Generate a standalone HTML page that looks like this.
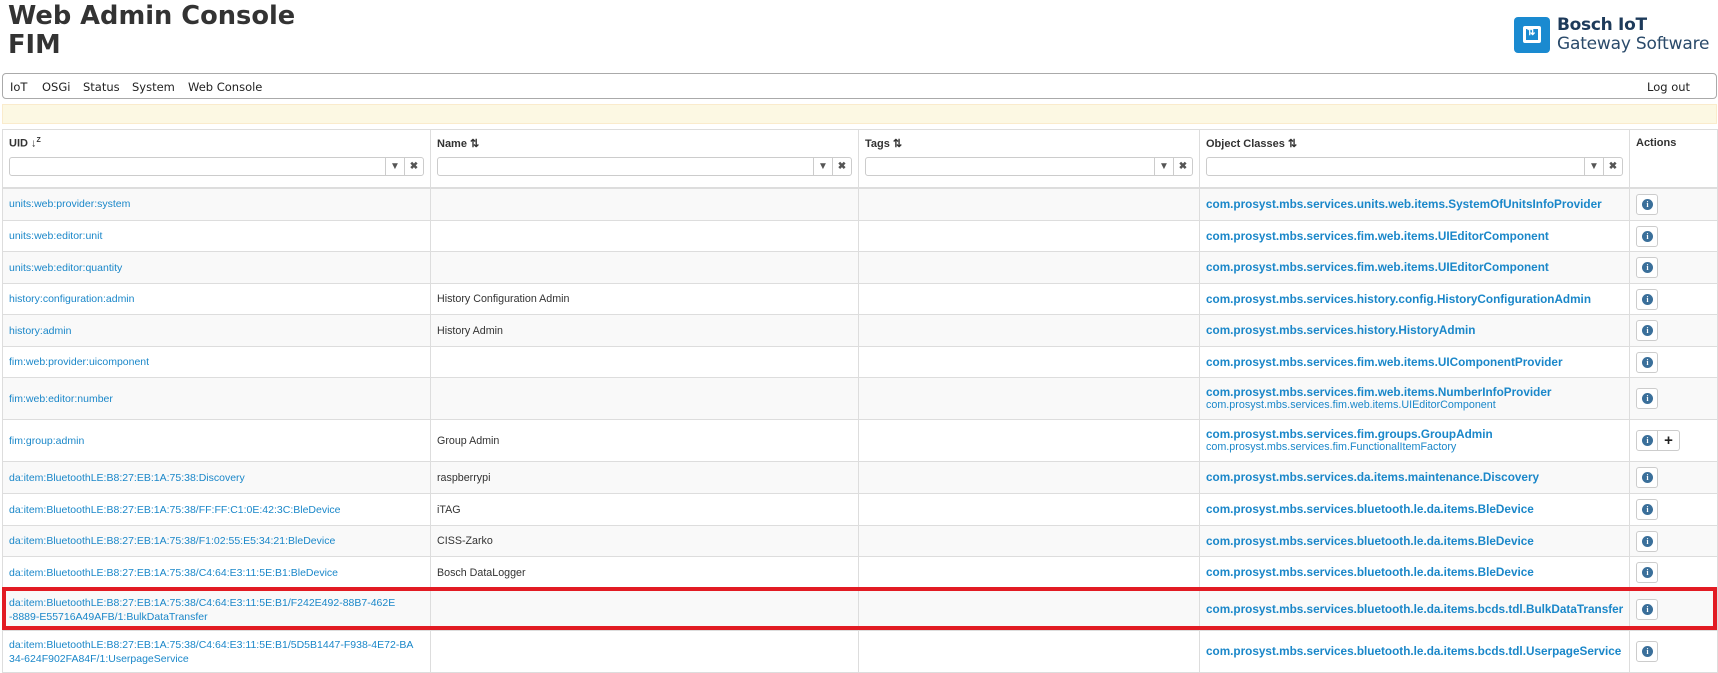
<!DOCTYPE html>
<html><head><meta charset="utf-8"><style>
*{box-sizing:border-box}
body{margin:0;width:1718px;height:670px;overflow:hidden;background:#fff;font-family:"Liberation Sans",Arial,sans-serif;font-size:10.7px;color:#333;position:relative}
h1{position:absolute;left:8px;top:2px;margin:0;font:bold 25.7px/29px "DejaVu Sans",Verdana,sans-serif;color:#333}
.logo{position:absolute;left:1514px;top:17px;width:36px;height:36px;background:#1a8ad0;border-radius:4px}
.logo i{position:absolute;left:9px;top:9px;width:18px;height:17px;background:#fff;border-radius:2px}
.logo i:before{content:"";position:absolute;left:3px;top:3px;width:12px;height:11px;background:#1a8ad0}
.logo i:after{content:"⇅";position:absolute;left:4px;top:1px;font:bold 10px sans-serif;color:#fff}
.lt1{position:absolute;left:1557px;top:15px;font:bold 17px "DejaVu Sans",sans-serif;color:#1d3a5a;letter-spacing:-0.3px}
.lt2{position:absolute;left:1557px;top:34px;font:17px "DejaVu Sans",sans-serif;color:#2a4a6a;letter-spacing:-0.2px}
.nav{position:absolute;left:2px;top:73px;width:1715px;height:26px;border:1px solid #aaa;border-radius:4px;font:11.5px "DejaVu Sans",Verdana,sans-serif;color:#222}
.nav span{position:absolute;top:6px}
.warn{position:absolute;left:2px;top:104px;width:1715px;height:20px;background:#fcf8e3;border:1px solid #faebcc}
table{position:absolute;left:2px;top:129px;border-collapse:collapse;table-layout:fixed;width:1715px}
td,th{border:1px solid #ddd;padding:0 6px;vertical-align:middle;text-align:left;white-space:nowrap;overflow:hidden}
th{vertical-align:top;padding-top:7px;font-size:11px;height:58px;border-bottom:2px solid #ddd}
tbody tr:nth-child(odd){background:#f9f9f9}
a{color:#1a87c9;text-decoration:none;font-size:10.5px;line-height:14px;display:inline-block}
.oc{font-weight:bold;color:#1a87c9;font-size:11.75px}
.oc2{font-size:10.75px;color:#1a87c9}
.f{position:relative;margin-top:7px;height:19px;border:1px solid #ccc;border-radius:3px;background:#fff}
.f b{position:absolute;top:0;height:17px;width:19px;border-left:1px solid #ccc;text-align:center;font-size:10px;line-height:17px;color:#555}
.btn{display:inline-block;width:22px;height:21px;border:1px solid #ccc;border-radius:3px;background:#fff;vertical-align:middle;position:relative}
.btn i{position:absolute;left:5px;top:4px;width:11px;height:11px;border-radius:50%;background:#3a6f9a;color:#fff;font:bold 8px/11px "Liberation Serif",serif;text-align:center;font-style:normal}
.red{position:absolute;left:2px;top:587px;width:1715px;height:43px;border:4px solid #e21b23}
</style></head><body>
<h1>Web Admin Console<br>FIM</h1>
<div class="logo"><i></i></div>
<div class="lt1">Bosch IoT</div><div class="lt2">Gateway Software</div>
<div class="nav"><span style="left:7px">IoT</span><span style="left:39px">OSGi</span><span style="left:80px">Status</span><span style="left:129px">System</span><span style="left:185px">Web Console</span><span style="left:1644px">Log out</span></div>
<div class="warn"></div>
<table>
<colgroup><col style="width:428px"><col style="width:428px"><col style="width:341px"><col style="width:430px"><col style="width:88px"></colgroup>
<thead><tr>
<th>UID ↓<sup style="font-size:7px">Z</sup><div class="f"><b style="right:19px">▼</b><b style="right:0">✖</b></div></th>
<th>Name ⇅<div class="f"><b style="right:19px">▼</b><b style="right:0">✖</b></div></th>
<th>Tags ⇅<div class="f"><b style="right:19px">▼</b><b style="right:0">✖</b></div></th>
<th>Object Classes ⇅<div class="f"><b style="right:19px">▼</b><b style="right:0">✖</b></div></th>
<th>Actions</th></tr></thead>
<tbody>
<tr style="height:33px"><td><a>units:web:provider:system</a></td><td></td><td></td><td class="oc">com.prosyst.mbs.services.units.web.items.SystemOfUnitsInfoProvider</td><td><span class="btn"><i>i</i></span></td></tr>
<tr style="height:31px"><td><a>units:web:editor:unit</a></td><td></td><td></td><td class="oc">com.prosyst.mbs.services.fim.web.items.UIEditorComponent</td><td><span class="btn"><i>i</i></span></td></tr>
<tr style="height:32px"><td><a>units:web:editor:quantity</a></td><td></td><td></td><td class="oc">com.prosyst.mbs.services.fim.web.items.UIEditorComponent</td><td><span class="btn"><i>i</i></span></td></tr>
<tr style="height:31px"><td><a>history:configuration:admin</a></td><td>History Configuration Admin</td><td></td><td class="oc">com.prosyst.mbs.services.history.config.HistoryConfigurationAdmin</td><td><span class="btn"><i>i</i></span></td></tr>
<tr style="height:32px"><td><a>history:admin</a></td><td>History Admin</td><td></td><td class="oc">com.prosyst.mbs.services.history.HistoryAdmin</td><td><span class="btn"><i>i</i></span></td></tr>
<tr style="height:31px"><td><a>fim:web:provider:uicomponent</a></td><td></td><td></td><td class="oc">com.prosyst.mbs.services.fim.web.items.UIComponentProvider</td><td><span class="btn"><i>i</i></span></td></tr>
<tr style="height:42px"><td><a>fim:web:editor:number</a></td><td></td><td></td><td><span class="oc">com.prosyst.mbs.services.fim.web.items.NumberInfoProvider</span><br><span class="oc2">com.prosyst.mbs.services.fim.web.items.UIEditorComponent</span></td><td><span class="btn"><i>i</i></span></td></tr>
<tr style="height:42px"><td><a>fim:group:admin</a></td><td>Group Admin</td><td></td><td><span class="oc">com.prosyst.mbs.services.fim.groups.GroupAdmin</span><br><span class="oc2">com.prosyst.mbs.services.fim.FunctionalItemFactory</span></td><td><span class="btn" style="border-radius:3px 0 0 3px"><i>i</i></span><span class="btn" style="border-left:0;border-radius:0 3px 3px 0;text-align:center;font:bold 15px/19px sans-serif;color:#222">+</span></td></tr>
<tr style="height:32px"><td><a>da:item:BluetoothLE:B8:27:EB:1A:75:38:Discovery</a></td><td>raspberrypi</td><td></td><td class="oc">com.prosyst.mbs.services.da.items.maintenance.Discovery</td><td><span class="btn"><i>i</i></span></td></tr>
<tr style="height:32px"><td><a>da:item:BluetoothLE:B8:27:EB:1A:75:38/FF:FF:C1:0E:42:3C:BleDevice</a></td><td>iTAG</td><td></td><td class="oc">com.prosyst.mbs.services.bluetooth.le.da.items.BleDevice</td><td><span class="btn"><i>i</i></span></td></tr>
<tr style="height:31px"><td><a>da:item:BluetoothLE:B8:27:EB:1A:75:38/F1:02:55:E5:34:21:BleDevice</a></td><td>CISS-Zarko</td><td></td><td class="oc">com.prosyst.mbs.services.bluetooth.le.da.items.BleDevice</td><td><span class="btn"><i>i</i></span></td></tr>
<tr style="height:32px"><td><a>da:item:BluetoothLE:B8:27:EB:1A:75:38/C4:64:E3:11:5E:B1:BleDevice</a></td><td>Bosch DataLogger</td><td></td><td class="oc">com.prosyst.mbs.services.bluetooth.le.da.items.BleDevice</td><td><span class="btn"><i>i</i></span></td></tr>
<tr style="height:42px"><td><a>da:item:BluetoothLE:B8:27:EB:1A:75:38/C4:64:E3:11:5E:B1/F242E492-88B7-462E<br>-8889-E55716A49AFB/1:BulkDataTransfer</a></td><td></td><td></td><td class="oc">com.prosyst.mbs.services.bluetooth.le.da.items.bcds.tdl.BulkDataTransfer</td><td><span class="btn"><i>i</i></span></td></tr>
<tr style="height:42px"><td><a>da:item:BluetoothLE:B8:27:EB:1A:75:38/C4:64:E3:11:5E:B1/5D5B1447-F938-4E72-BA<br>34-624F902FA84F/1:UserpageService</a></td><td></td><td></td><td class="oc">com.prosyst.mbs.services.bluetooth.le.da.items.bcds.tdl.UserpageService</td><td><span class="btn"><i>i</i></span></td></tr>
</tbody></table>
<div class="red"></div>
</body></html>
